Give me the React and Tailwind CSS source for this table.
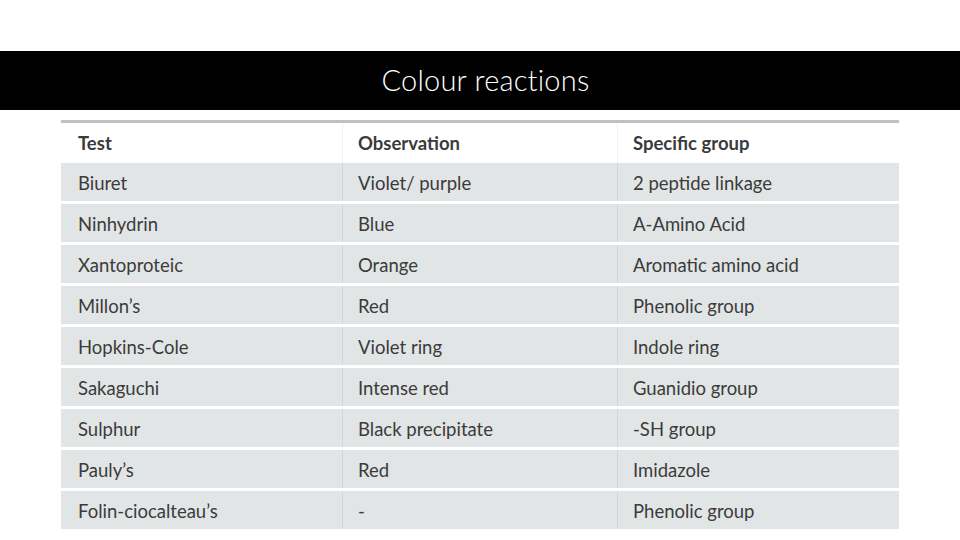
const rows = [
  ["Biuret", "Violet/ purple", "2 peptide linkage"],
  ["Ninhydrin", "Blue", "A-Amino Acid"],
  ["Xantoproteic", "Orange", "Aromatic amino acid"],
  ["Millon’s", "Red", "Phenolic group"],
  ["Hopkins-Cole", "Violet ring", "Indole ring"],
  ["Sakaguchi", "Intense red", "Guanidio group"],
  ["Sulphur", "Black precipitate", "-SH group"],
  ["Pauly’s", "Red", "Imidazole"],
  ["Folin-ciocalteau’s", "-", "Phenolic group"],
];

const cols = "grid grid-cols-[281px_275px_282px]";

export default function App() {
  return (
    <div className="w-[960px] h-[540px] bg-white pt-[51px] font-['Lato','Liberation_Sans',sans-serif] text-[#3b3b3b]">
      <div className="h-[59px] bg-black flex items-center justify-center pl-[11px]">
        <h1 className="text-white text-[29px] font-light tracking-[0.2px] leading-none pb-[2px]">
          Colour reactions
        </h1>
      </div>

      <div className="mx-[61px] mt-[10px] w-[838px]">
        <div className="h-[3px] bg-[#bfc1c2]" />
        <div className={`${cols} h-[40px] text-[18.5px] font-bold`}>
          <div className="pl-[17px] pt-[2px] flex items-center">Test</div>
          <div className="pl-[15px] pt-[2px] flex items-center border-l border-[#f3f3f3]">Observation</div>
          <div className="pl-[15px] pt-[2px] flex items-center border-l border-[#f3f3f3]">Specific group</div>
        </div>
        <div className="flex flex-col gap-[3px]">
          {rows.map((r, i) => (
            <div key={i} className={`${cols} h-[38px] bg-[#e2e5e6] text-[18.5px]`}>
              <div className="pl-[17px] pt-[4px] flex items-center">{r[0]}</div>
              <div className="pl-[15px] pt-[4px] flex items-center border-l border-[#d3d6d7]">{r[1]}</div>
              <div className="pl-[15px] pt-[4px] flex items-center border-l border-[#d3d6d7]">{r[2]}</div>
            </div>
          ))}
        </div>
      </div>
    </div>
  );
}
